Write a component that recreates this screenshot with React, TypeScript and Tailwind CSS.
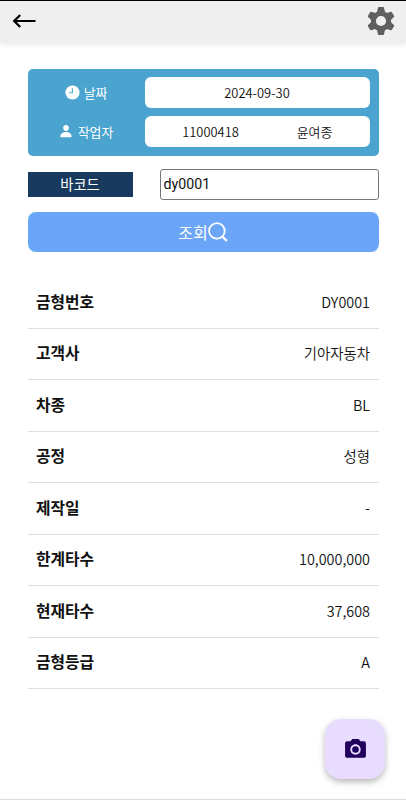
import { useState } from "react";
import { MdCameraAlt } from "react-icons/md";
import { IoPerson } from "react-icons/io5";

const moldInfo = [
    { label: "금형번호", value: "DY0001" },
    { label: "고객사", value: "기아자동차" },
    { label: "차종", value: "BL" },
    { label: "공정", value: "성형" },
    { label: "제작일", value: "-" },
    { label: "한계타수", value: "10,000,000" },
    { label: "현재타수", value: "37,608" },
    { label: "금형등급", value: "A" },
];

const toothAngles = [0, 60, 120, 180, 240, 300];

function BackIcon() {
    return (
        <svg width="24" height="14" viewBox="0 0 24 14" fill="none" stroke="#000">
            <path d="M2 7H23.5" strokeWidth="2" />
            <path d="M8.2 1L2.2 7L8.2 13" strokeWidth="2.3" />
        </svg>
    );
}

function GearIcon() {
    return (
        <svg width="28" height="28" viewBox="-14 -14 28 28" fill="#5f5f5f">
            <circle r="7.6" fill="none" stroke="#5f5f5f" strokeWidth="5" />
            {toothAngles.map((angle) => (
                <path key={angle} transform={`rotate(${angle})`} d="M-4.2 -8L-3 -13.2Q-2.9 -13.9 -2.2 -13.9H2.2Q2.9 -13.9 3 -13.2L4.2 -8Z" />
            ))}
        </svg>
    );
}

function ClockIcon() {
    return (
        <svg width="15" height="15" viewBox="0 0 15 15" fill="none">
            <circle cx="7.5" cy="7.5" r="7.1" fill="#fff" />
            <path d="M7.4 3.3V7.7H4.2" stroke="#4aa4cf" strokeWidth="1.1" />
        </svg>
    );
}

function SearchIcon() {
    return (
        <svg width="20" height="20" viewBox="0 0 20 20" fill="none" stroke="#fff" strokeWidth="1.8">
            <circle cx="8.9" cy="8.9" r="7.8" />
            <path d="M14.7 14.9L18.8 19" strokeWidth="2.2" />
        </svg>
    );
}

function Header() {
    return (
        <header className="flex h-[43px] items-center justify-between border-t border-black bg-[#efefef] pl-3 pr-[11px] shadow-[0_2px_5px_rgba(0,0,0,0.08)]">
            <button className="-mt-0.5" aria-label="back">
                <BackIcon />
            </button>
            <button className="-mt-0.5" aria-label="settings">
                <GearIcon />
            </button>
        </header>
    );
}

function WorkerPanel() {
    return (
        <section className="flex flex-col gap-2 rounded-[5px] bg-[#4aa4cf] py-[8.25px] pr-[9px] text-[12.9px] font-[350]">
            <div className="flex h-[31px] items-center">
                <div className="flex w-[117px] items-center justify-center gap-1 pb-px font-normal text-white">
                    <ClockIcon />
                    <span>날짜</span>
                </div>
                <div className="flex h-full flex-1 items-center justify-center rounded-[6px] bg-white pb-px">2024-09-30</div>
            </div>
            <div className="flex h-[31px] items-center">
                <div className="flex w-[117px] items-center justify-center gap-[5px] pb-px font-normal text-white">
                    <IoPerson size={14} />
                    <span>작업자</span>
                </div>
                <div className="flex h-full flex-1 items-center rounded-[6px] bg-white pb-px">
                    <span className="w-[132px] text-center">11000418</span>
                    <span className="w-[76px] text-center">윤여종</span>
                </div>
            </div>
        </section>
    );
}

function App() {
    const [barcode, setBarcode] = useState("dy0001");

    return (
        <div className="flex h-[800px] w-[406px] flex-col border-b border-[#dcdcdc] bg-white font-['Noto_Sans_CJK_KR',sans-serif] text-[#111]">
            <Header />
            <main className="px-[27.5px] pt-[26px]">
                <WorkerPanel />

                <div className="mt-[13.5px] flex items-center justify-between">
                    <div className="flex h-[25px] w-[105px] items-center justify-center bg-[#193a5f] pb-px text-[14.3px] text-white">바코드</div>
                    <input
                        className="h-[31px] w-[219px] rounded-[3px] border border-[#767676] px-[3px] pb-px font-[Roboto,sans-serif] text-[14.2px] outline-none"
                        value={barcode}
                        onChange={(e) => setBarcode(e.target.value)}
                    />
                </div>

                <button className="mt-3 flex h-10 w-full items-center justify-center rounded-lg bg-[#6ba5f8] pb-px text-[16px] text-white">
                    조회
                    <SearchIcon />
                </button>

                <dl className="mt-[25px]">
                    {moldInfo.map(({ label, value }) => (
                        <div key={label} className="flex h-[51.5px] items-center justify-between border-b border-[#dedede] px-[8.5px] pb-px">
                            <dt className="text-[15.8px] font-bold">{label}</dt>
                            <dd className="text-[14.4px] font-[350]">{value}</dd>
                        </div>
                    ))}
                </dl>
            </main>

            <button
                className="ml-auto mr-[21px] mt-[30px] flex size-[60px] items-center justify-center rounded-[16px] bg-[#e8ddff] shadow-[0_3px_6px_rgba(0,0,0,0.28)]"
                aria-label="camera"
            >
                <MdCameraAlt size={25} color="#21005d" />
            </button>
        </div>
    );
}

export default App;
